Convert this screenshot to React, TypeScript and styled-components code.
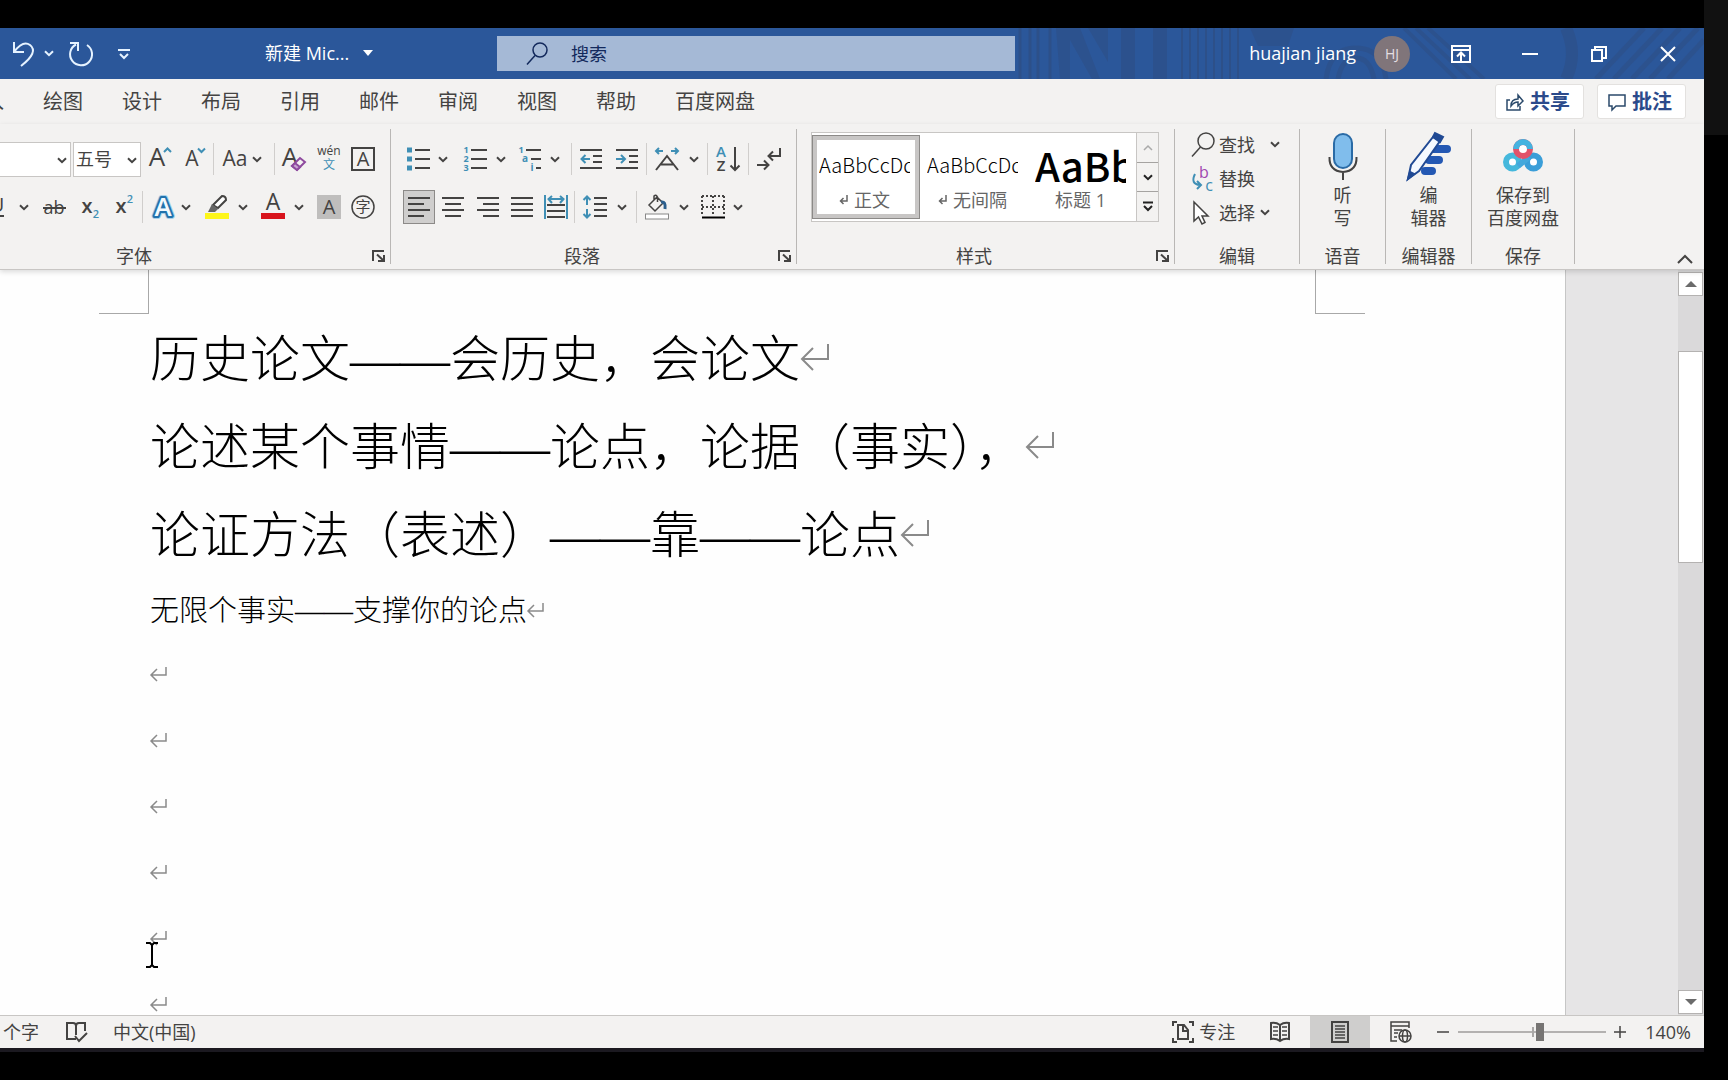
import React from "react";
import styled, { createGlobalStyle, css } from "styled-components";

const ink = "#444342";
const blue = "#2b579a";
const accent = "#3f8fb5";
const uiFont = `"Open Sans", "Noto Sans CJK SC", sans-serif`;

const GlobalStyle = createGlobalStyle`
  *, *::before, *::after { box-sizing: border-box; }
  body { margin: 0; background: #000; font-family: ${uiFont}; color: ${ink}; }
  button, select, input { font: inherit; color: inherit; }
  button { border: 0; background: none; padding: 0; margin: 0; }
  p { margin: 0; }
  svg { display: block; flex: none; overflow: visible; }
`;

/* ---------- frame ---------- */
const Screen = styled.div`
  display: flex;
  height: 100vh;
  overflow: hidden;
`;
const Column = styled.div`
  flex: 1;
  min-width: 0;
  display: flex;
  flex-direction: column;
  padding-top: 28px;
`;
const AppWindow = styled.div`
  flex: 1;
  min-height: 0;
  display: flex;
  flex-direction: column;
  overflow: hidden;
  background: #f3f2f1;
`;
const Desktop = styled.div`
  height: 32px;
  background: linear-gradient(#1b1920 0 4px, #000 4px);
`;
const Side = styled.div`
  width: 24px;
  background: linear-gradient(#111 0 135px, #000 135px);
`;

/* ---------- title bar ---------- */
const TitleBar = styled.header`
  position: relative;
  flex: none;
  height: 51px;
  display: grid;
  grid-template-columns: 497px 518px 1fr;
  align-items: center;
  overflow: hidden;
  background: ${blue};
  color: #fff;
  font-size: 18px;
`;
const Pattern = styled.svg`
  position: absolute;
  right: 0;
  top: 0;
`;
const QuickArea = styled.div`
  display: flex;
  align-items: center;
  padding-left: 12px;
`;
const QuickButton = styled.button<{ $w: number }>`
  width: ${(p) => p.$w}px;
  height: 40px;
  display: flex;
  align-items: center;
`;
const FileName = styled.button`
  display: flex;
  align-items: center;
  gap: 14px;
  margin-left: 111px;
  padding-bottom: 2px;
  line-height: 24px;
`;
const SearchBox = styled.label`
  display: flex;
  align-items: center;
  gap: 22px;
  height: 35px;
  padding-left: 30px;
  background: #a5b9d6;
  color: #13295c;
`;
const SearchInput = styled.input`
  flex: 1;
  min-width: 0;
  border: 0;
  padding: 0;
  background: transparent;
  outline: 0;
  &::placeholder { color: #13295c; opacity: 1; }
`;
const Account = styled.div`
  position: relative;
  display: flex;
  align-items: center;
  justify-content: flex-end;
  padding-right: 2px;
`;
const UserName = styled.span`
  padding-bottom: 2px;
  line-height: 24px;
`;
const Avatar = styled.span`
  display: grid;
  place-items: center;
  width: 36px;
  height: 36px;
  margin: 0 16px 0 18px;
  border-radius: 50%;
  background: #80757a;
  color: #e4dfe2;
  font-size: 14px;
`;
const WindowButton = styled.button`
  width: 69px;
  height: 51px;
  display: grid;
  place-items: center;
`;

/* ---------- tabs ---------- */
const TabBar = styled.div`
  flex: none;
  display: flex;
  align-items: center;
  height: 45px;
  padding-right: 18px;
  font-size: 20px;
`;
const Tabs = styled.nav`
  flex: 1;
  display: flex;
  gap: 39px;
  margin-left: -36px;
`;
const Tab = styled.button`
  white-space: nowrap;
  line-height: 28px;
`;
const PillButton = styled.button`
  display: flex;
  align-items: center;
  gap: 6px;
  height: 35px;
  margin-left: 13px;
  padding: 0 13px 0 10px;
  border: 1px solid #e3e1df;
  border-radius: 3px;
  background: #fff;
  color: #2b4a8b;
  font-weight: 700;
  line-height: 28px;
`;

/* ---------- ribbon ---------- */
const Ribbon = styled.div`
  position: relative;
  z-index: 1;
  flex: none;
  display: flex;
  padding: 5px 0;
  border-bottom: 1px solid #c8c6c4;
  box-shadow: 0 2px 5px rgba(0, 0, 0, 0.14);
  font-size: 18px;
`;
const Group = styled.section<{ $w: number; $clip?: number }>`
  flex: none;
  width: ${(p) => p.$w}px;
  height: 135px;
  margin-left: -${(p) => p.$clip ?? 0}px;
  display: flex;
  flex-direction: column;
  border-right: 1px solid #b9b7b5;
`;
const GroupFoot = styled.div`
  display: flex;
  align-items: center;
  height: 16px;
  margin-top: auto;
  line-height: 16px;
`;
const GroupName = styled.span`
  flex: 1;
  text-align: center;
`;
const Launcher = styled.button`
  width: 23px;
  display: flex;
  padding-left: 5px;
`;
const Rows = styled.div`
  padding-top: 6px;
`;
const Row = styled.div<{ $end?: boolean }>`
  display: flex;
  align-items: center;
  height: 48px;
  padding: ${(p) => (p.$end ? "0 10px 0 0" : "0 0 0 12px")};
  justify-content: ${(p) => (p.$end ? "flex-end" : "flex-start")};
`;
const Tool = styled.button<{ $w: number; $on?: boolean }>`
  flex: none;
  width: ${(p) => p.$w}px;
  height: 34px;
  display: flex;
  align-items: center;
  justify-content: center;
  ${(p) => p.$on && css`
    border: 1px solid #8c8a88;
    background: #cfcecd;
  `}
`;
const CaretButton = styled.button<{ $w: number }>`
  flex: none;
  width: ${(p) => p.$w}px;
  height: 34px;
  display: flex;
  align-items: center;
  padding-left: 3px;
`;
const Divider = styled.span`
  width: 1px;
  height: 32px;
  margin: 0 1px;
  background: #d0cecc;
`;
const Combo = styled.span<{ $w?: number }>`
  position: relative;
  flex: ${(p) => (p.$w ? `0 0 ${p.$w}px` : "1")};
  margin-right: ${(p) => (p.$w ? 0 : 2)}px;
`;
const ComboSelect = styled.select`
  appearance: none;
  display: block;
  width: 100%;
  height: 35px;
  padding: 0 0 0 2px;
  border: 1px solid #c8c6c4;
  border-radius: 0;
  background: #fff;
`;
const ComboMark = styled.span`
  position: absolute;
  right: 4px;
  top: 15px;
  pointer-events: none;
`;

const Gallery = styled.div`
  display: flex;
  height: 90px;
  margin: 3px 0 0 14px;
  width: 348px;
  border: 1px solid #c8c6c4;
  background: #fff;
`;
const StyleCard = styled.button<{ $on?: boolean }>`
  flex: 1;
  min-width: 0;
  height: 84px;
  margin-top: 2px;
  padding: 0 5px 0 2px;
  display: flex;
  flex-direction: column;
  justify-content: flex-end;
  border: 5px solid ${(p) => (p.$on ? "#c8c6c5" : "transparent")};
  outline: ${(p) => (p.$on ? "1px solid #8c8a88" : "0")};
  outline-offset: -1px;
`;
const Sample = styled.span<{ $big?: boolean }>`
  align-self: stretch;
  overflow: hidden;
  white-space: nowrap;
  text-align: left;
  color: #000;
  font-family: "Noto Sans CJK SC", sans-serif;
  font-size: ${(p) => (p.$big ? 40 : 20)}px;
  font-weight: ${(p) => (p.$big ? 500 : 300)};
  line-height: ${(p) => (p.$big ? 50 : 42)}px;
`;
const StyleName = styled.span`
  display: flex;
  align-items: center;
  justify-content: center;
  gap: 6px;
  color: #666;
  line-height: 28px;
`;
const GalleryScroll = styled.div`
  width: 22px;
  display: flex;
  flex-direction: column;
  border-left: 1px solid #c8c6c4;
  background: #f3f2f1;
`;
const GalleryButton = styled.button`
  flex: 1;
  display: grid;
  place-items: center;
  & + & { border-top: 1px solid #a5a3a1; }
`;

const EditList = styled.div`
  display: flex;
  flex-direction: column;
  padding-left: 16px;
`;
const EditItem = styled.button<{ $gap: number }>`
  display: flex;
  align-items: center;
  height: 34px;
  padding-bottom: 3px;
  line-height: 24px;
  & > svg:first-child { margin-right: 4px; }
  & > svg + span + svg { margin-left: ${(p) => p.$gap}px; }
`;
const BigButton = styled.button`
  display: flex;
  flex-direction: column;
  align-items: center;
  gap: 4px;
  padding-top: 3px;
  line-height: 23px;
  text-align: center;
  white-space: pre-line;
`;
const Collapse = styled.button`
  align-self: flex-end;
  margin: 0 11px 0 auto;
`;

/* ---------- document ---------- */
const Workspace = styled.main`
  flex: 1;
  min-height: 0;
  display: flex;
  background: #e6e5e6;
`;
const Page = styled.article`
  position: relative;
  flex: 1;
  min-width: 0;
  overflow: hidden;
  background: #fefefe;
  border-right: 1px solid #c6c6c6;
  font-family: "Liberation Serif", "Noto Sans CJK SC", serif;
  color: #000;
`;
const Corners = styled.div`
  display: flex;
  justify-content: space-between;
  padding: 0 200px 0 99px;
`;
const Corner = styled.span<{ $right?: boolean }>`
  width: 50px;
  height: 44px;
  border: solid #a8a8a8;
  border-width: ${(p) => (p.$right ? "0 0 1px 1px" : "0 1px 1px 0")};
`;
const Body = styled.div`
  padding: 2px 0 0 150px;
`;
const Line = styled.p<{ $kind: "large" | "small" | "blank" }>`
  display: flex;
  align-items: center;
  white-space: nowrap;
  font-weight: 300;
  font-size: ${(p) => (p.$kind === "large" ? 50 : 29)}px;
  line-height: ${(p) => ({ large: 88, small: 62, blank: 66 })[p.$kind]}px;
  height: ${(p) => ({ large: 88, small: 62, blank: 66 })[p.$kind]}px;
  & > svg { margin-bottom: ${(p) => (p.$kind === "large" ? 6 : 3)}px; }
`;
const Pointer = styled.svg`
  position: absolute;
  left: 145px;
  top: 672px;
`;
const Gutter = styled.div`
  width: 112px;
`;
const ScrollBar = styled.div`
  width: 26px;
  display: flex;
  flex-direction: column;
  padding: 2px 1px 1px 0;
  background: #dad9da;
`;
const ScrollButton = styled.button`
  height: 24px;
  display: grid;
  place-items: center;
  border: 1px solid #b4b2b1;
  background: #fff;
`;
const ScrollThumb = styled.div`
  height: 212px;
  margin: 55px 0 auto;
  border: 1px solid #b4b2b1;
  background: #fff;
`;

/* ---------- status bar ---------- */
const Status = styled.footer`
  flex: none;
  display: flex;
  align-items: stretch;
  height: 33px;
  padding: 0 13px 0 3px;
  border-top: 1px solid #c8c6c4;
  font-size: 18px;
  line-height: 32px;
`;
const StatusButton = styled.button<{ $w?: number; $on?: boolean; $gap?: number }>`
  width: ${(p) => (p.$w ? `${p.$w}px` : "auto")};
  display: flex;
  align-items: center;
  justify-content: center;
  gap: 5px;
  margin-left: ${(p) => p.$gap ?? 0}px;
  background: ${(p) => (p.$on ? "#cfcecd" : "transparent")};
`;
const Fill = styled.span`
  flex: 1;
`;
const Zoom = styled.input`
  appearance: none;
  align-self: center;
  width: 148px;
  height: 18px;
  margin: 0 4px;
  background:
    linear-gradient(#a9a7a6, #a9a7a6) 74px 50% / 2px 10px no-repeat,
    linear-gradient(#b3b1b0, #b3b1b0) 0 50% / 100% 2px no-repeat;
  &::-webkit-slider-thumb {
    appearance: none;
    width: 8px;
    height: 18px;
    background: #767473;
  }
`;

/* ---------- drawings ---------- */
type IconProps = { w: number; h: number; children: React.ReactNode; color?: string; sw?: number };
const Icon = ({ w, h, children, color = ink, sw = 2 }: IconProps) => (
  <svg width={w} height={h} viewBox={`0 0 ${w} ${h}`} fill="none" stroke={color} strokeWidth={sw} aria-hidden="true">
    {children}
  </svg>
);
type GlyphProps = { x: number; y: number; size: number; fill?: string; weight?: number; children: string };
const Glyph = ({ x, y, size, fill = ink, weight = 400, children }: GlyphProps) => (
  <text x={x} y={y} fontSize={size} fill={fill} stroke="none" fontWeight={weight} textAnchor="middle" fontFamily={uiFont}>
    {children}
  </text>
);
const Chevron = ({ color = ink }: { color?: string }) => (
  <Icon w={10} h={7} color={color}><path d="M1 1.2 5 5.2 9 1.2" /></Icon>
);
const Caret = ({ w, label }: { w: number; label: string }) => (
  <CaretButton $w={w} aria-label={label}><Chevron /></CaretButton>
);
const ReturnMark = ({ large }: { large?: boolean }) =>
  large ? (
    <Icon w={30} h={28} color="#8a8a8a" sw={2}><path d="M28 1V16H2M13 5 2 16 13 27" /></Icon>
  ) : (
    <Icon w={18} h={16} color="#8a8a8a" sw={1.5}><path d="M16 1V9H1M7 3 1 9 7 15" /></Icon>
  );
const LauncherIcon = () => (
  <Icon w={14} h={14}><path d="M1 12V2H12M5 5.500 12 12M12 6V12H6" /></Icon>
);
const lines = (rows: number[][]) => <path d={rows.map(([a, b, y]) => `M${a} ${y}H${b}`).join("")} />;

const Foot = ({ name, launcher }: { name: string; launcher?: boolean }) => (
  <GroupFoot>
    <GroupName>{name}</GroupName>
    {launcher && <Launcher aria-label={`${name}设置`}><LauncherIcon /></Launcher>}
  </GroupFoot>
);

const FontGroup = () => (
  <Group $w={490} $clip={99}>
    <Rows>
      <Row $end>
        <Combo>
          <ComboSelect aria-label="字体"><option></option></ComboSelect>
          <ComboMark><Chevron /></ComboMark>
        </Combo>
        <Combo $w={68}>
          <ComboSelect aria-label="字号"><option>五号</option></ComboSelect>
          <ComboMark><Chevron /></ComboMark>
        </Combo>
        <Tool $w={37} aria-label="增大字号">
          <Icon w={24} h={26}><Glyph x={9} y={20} size={26}>A</Glyph><path d="M16 6 19.500 2.500 23 6" stroke={accent} /></Icon>
        </Tool>
        <Tool $w={34} aria-label="减小字号">
          <Icon w={22} h={26}><Glyph x={8} y={20} size={21}>A</Glyph><path d="M14 2.500 17.500 6 21 2.500" stroke={accent} /></Icon>
        </Tool>
        <Divider />
        <Tool $w={34} aria-label="更改大小写">
          <Icon w={28} h={26}><Glyph x={17} y={20} size={21}>Aa</Glyph></Icon>
        </Tool>
        <Caret w={24} label="大小写选项" />
        <Divider />
        <Tool $w={36} aria-label="清除格式">
          <Icon w={26} h={28}>
            <Glyph x={9} y={21} size={26}>A</Glyph>
            <path d="M11 21 19 13 24 17 16 25Z" fill="#f3f2f1" stroke="#8e4a9e" />
            <path d="M11 21 14 18 19 22 16 25Z" fill="#c9a3d2" stroke="#8e4a9e" />
          </Icon>
        </Tool>
        <Tool $w={34} aria-label="拼音指南">
          <Icon w={24} h={30}><Glyph x={12} y={11} size={12}>wén</Glyph><Glyph x={12} y={25} size={12} fill={accent}>文</Glyph></Icon>
        </Tool>
        <Tool $w={34} aria-label="字符边框">
          <Icon w={24} h={24}><rect x={1} y={1} width={22} height={22} /><Glyph x={12} y={19} size={20}>A</Glyph></Icon>
        </Tool>
      </Row>
      <Row $end>
        <Tool $w={38} aria-label="下划线">
          <Icon w={16} h={24}><Glyph x={8} y={17} size={20}>U</Glyph><path d="M1 21H15" /></Icon>
        </Tool>
        <Caret w={20} label="下划线选项" />
        <Tool $w={38} aria-label="删除线">
          <Icon w={24} h={24}><Glyph x={11} y={19} size={18}>ab</Glyph><path d="M0 13H23" /></Icon>
        </Tool>
        <Tool $w={34} aria-label="下标">
          <Icon w={20} h={28}><Glyph x={6} y={20} size={20} weight={600}>x</Glyph><Glyph x={15} y={25} size={11} fill={accent} weight={600}>2</Glyph></Icon>
        </Tool>
        <Tool $w={33} aria-label="上标">
          <Icon w={20} h={28}><Glyph x={6} y={20} size={20} weight={600}>x</Glyph><Glyph x={15} y={10} size={11} fill={accent} weight={600}>2</Glyph></Icon>
        </Tool>
        <Divider />
        <Tool $w={34} aria-label="文本效果">
          <svg width={26} height={28} viewBox="0 0 26 28" aria-hidden="true">
            <g fontFamily={uiFont} fontSize={26} fontWeight={600} textAnchor="middle" strokeLinejoin="round">
              <text x={15} y={23} fill="none" stroke="#a9cfe8" strokeWidth={6}>A</text>
              <text x={15} y={23} fill="none" stroke="#2272ac" strokeWidth={4}>A</text>
              <text x={15} y={23} fill="#f2f9fd">A</text>
            </g>
          </svg>
        </Tool>
        <Caret w={21} label="文本效果选项" />
        <Tool $w={36} aria-label="突出显示">
          <Icon w={26} h={26}>
            <rect x={1} y={19} width={24} height={6} fill="#fdf61b" stroke="none" />
            <path d="M9 11 18 2Q22 2 22 6L14 14Z" fill="#fff" />
            <path d="M8 10 14 15 11 18H4Z" fill="#666" stroke="none" />
          </Icon>
        </Tool>
        <Caret w={20} label="突出显示选项" />
        <Tool $w={36} aria-label="字体颜色">
          <Icon w={24} h={26}><Glyph x={12} y={16} size={23}>A</Glyph><rect x={0} y={19} width={24} height={6} fill="#d8141c" stroke="none" /></Icon>
        </Tool>
        <Caret w={21} label="字体颜色选项" />
        <Tool $w={34} aria-label="字符底纹">
          <Icon w={24} h={24}><rect width={24} height={24} fill="#bfbebd" stroke="none" /><Glyph x={12} y={19} size={20}>A</Glyph></Icon>
        </Tool>
        <Tool $w={34} aria-label="带圈字符">
          <Icon w={24} h={24} sw={1.500}><circle cx={12} cy={12} r={11} /><Glyph x={12} y={17} size={15}>字</Glyph></Icon>
        </Tool>
      </Row>
    </Rows>
    <Foot name="字体" launcher />
  </Group>
);

const ParagraphGroup = () => (
  <Group $w={406}>
    <Rows>
      <Row>
        <Tool $w={32} aria-label="项目符号">
          <Icon w={24} h={24}>
            {lines([[8, 23, 3], [8, 23, 12], [8, 23, 21]])}
            <path d="M0 .5H5V5.500H0ZM0 9.500H5V14.500H0ZM0 18.500H5V23.500H0Z" fill={accent} stroke="none" />
          </Icon>
        </Tool>
        <Caret w={22} label="项目符号选项" />
        <Tool $w={36} aria-label="编号">
          <Icon w={24} h={26}>
            {lines([[8, 24, 4], [8, 24, 13], [8, 24, 22]])}
            <Glyph x={3} y={7} size={9} fill={accent} weight={700}>1</Glyph>
            <Glyph x={3} y={16} size={9} fill={accent} weight={700}>2</Glyph>
            <Glyph x={3} y={25} size={9} fill={accent} weight={700}>3</Glyph>
          </Icon>
        </Tool>
        <Caret w={19} label="编号选项" />
        <Tool $w={35} aria-label="多级列表">
          <Icon w={24} h={26}>
            {lines([[8, 23, 4], [13, 23, 13], [18, 23, 22]])}
            <Glyph x={3} y={7} size={9} fill={accent} weight={700}>1</Glyph>
            <Glyph x={7} y={16} size={10} fill={accent} weight={700}>a</Glyph>
            <Glyph x={14} y={25} size={10} fill={accent} weight={700}>i</Glyph>
          </Icon>
        </Tool>
        <Caret w={23} label="多级列表选项" />
        <Divider />
        <Tool $w={36} aria-label="减少缩进量">
          <Icon w={22} h={22}>{lines([[0, 22, 2], [13, 22, 8], [13, 22, 14], [0, 22, 20]])}<path d="M10 11H1.500M5.500 7 1.500 11 5.500 15" stroke={accent} /></Icon>
        </Tool>
        <Tool $w={36} aria-label="增加缩进量">
          <Icon w={22} h={22}>{lines([[0, 22, 2], [13, 22, 8], [13, 22, 14], [0, 22, 20]])}<path d="M0 11H9M5 7 9 11 5 15" stroke={accent} /></Icon>
        </Tool>
        <Divider />
        <Tool $w={38} aria-label="中文版式">
          <Icon w={26} h={26}>
            <path d="M2 24 13 10 24 24M7 18.500H19" />
            <path d="M9 5H2M5 2 2 5 5 8M17 5H24M21 2 24 5 21 8" stroke={accent} />
          </Icon>
        </Tool>
        <Caret w={20} label="中文版式选项" />
        <Divider />
        <Tool $w={38} aria-label="排序">
          <Icon w={26} h={28}>
            <Glyph x={6} y={12} size={15} fill={accent} weight={600}>A</Glyph>
            <Glyph x={6} y={26} size={15} weight={600}>Z</Glyph>
            <path d="M20 2V25M15.500 20.500 20 25 24.500 20.500" />
          </Icon>
        </Tool>
        <Divider />
        <Tool $w={38} aria-label="显示编辑标记">
          <Icon w={26} h={26}><path d="M24 2V10H13M17 5.500 12.500 10 17 14.500M1 19H12M8 14.500 12.500 19 8 23.500" /></Icon>
        </Tool>
      </Row>
      <Row>
        <Tool $w={32} $on aria-label="左对齐"><Icon w={22} h={22}>{lines([[0, 22, 2], [0, 16, 8], [0, 22, 14], [0, 16, 20]])}</Icon></Tool>
        <Tool $w={36} aria-label="居中"><Icon w={22} h={22}>{lines([[0, 22, 2], [3, 19, 8], [0, 22, 14], [3, 19, 20]])}</Icon></Tool>
        <Tool $w={34} aria-label="右对齐"><Icon w={22} h={22}>{lines([[0, 22, 2], [6, 22, 8], [0, 22, 14], [6, 22, 20]])}</Icon></Tool>
        <Tool $w={34} aria-label="两端对齐"><Icon w={22} h={22}>{lines([[0, 22, 2], [0, 22, 8], [0, 22, 14], [0, 22, 20]])}</Icon></Tool>
        <Tool $w={34} aria-label="分散对齐">
          <Icon w={24} h={24}>
            {lines([[3, 21, 10], [3, 21, 16], [3, 21, 22]])}
            <path d="M1 0V24M23 0V24M4 4H20M8 1 4.500 4 8 8M16 1 19.500 4 16 8" stroke={accent} />
          </Icon>
        </Tool>
        <Divider />
        <Tool $w={38} aria-label="行距">
          <Icon w={24} h={24}>{lines([[11, 24, 3], [11, 24, 9], [11, 24, 15], [11, 24, 21]])}<path d="M4 10V2M.5 5 4 1.500 7.500 5M4 14V22M.5 19 4 22.500 7.500 19" stroke={accent} /></Icon>
        </Tool>
        <Caret w={21} label="行距选项" />
        <Divider />
        <Tool $w={38} aria-label="底纹">
          <Icon w={26} h={26} sw={1.500}>
            <path d="M5 11 13 3 19 9 11 17ZM10 6V2Q12 0 13.500 3V8" />
            <path d="M17 8Q22 7 21 15" stroke="#2c5f8d" strokeWidth={3} />
            <rect x={1.500} y={20} width={23} height={5} fill="#fff" stroke="#888" strokeWidth={1} />
          </Icon>
        </Tool>
        <Caret w={20} label="底纹选项" />
        <Tool $w={34} aria-label="边框">
          <Icon w={24} h={24}>
            <path d="M1 1H23M1 12H23M1 1V21M12 1V21M23 1V21" strokeDasharray="2 2" />
            <path d="M1 22.500H24" stroke="#000" />
          </Icon>
        </Tool>
        <Caret w={20} label="边框选项" />
      </Row>
    </Rows>
    <Foot name="段落" launcher />
  </Group>
);

const SmallReturn = () => (
  <Icon w={9} h={10} color="#666" sw={1.500}><path d="M8 0V6H2M4.500 3 1.500 6 4.500 9" /></Icon>
);

const StylesGroup = () => (
  <Group $w={378}>
    <Gallery>
      <StyleCard $on><Sample>AaBbCcDd</Sample><StyleName><SmallReturn />正文</StyleName></StyleCard>
      <StyleCard><Sample>AaBbCcDd</Sample><StyleName><SmallReturn />无间隔</StyleName></StyleCard>
      <StyleCard><Sample $big>AaBb</Sample><StyleName>标题 1</StyleName></StyleCard>
      <GalleryScroll>
        <GalleryButton aria-label="上一行"><Icon w={10} h={7} color="#aaa" sw={1.500}><path d="M1 6 5 2 9 6" /></Icon></GalleryButton>
        <GalleryButton aria-label="下一行"><Chevron color="#222" /></GalleryButton>
        <GalleryButton aria-label="更多样式"><Icon w={10} h={12} color="#222"><path d="M0 1.500H10M1 5 5 9 9 5" /></Icon></GalleryButton>
      </GalleryScroll>
    </Gallery>
    <Foot name="样式" launcher />
  </Group>
);

const EditGroup = () => (
  <Group $w={125}>
    <EditList>
      <EditItem $gap={15}>
        <Icon w={24} h={26} sw={1.500}><circle cx={15} cy={9} r={8} /><path d="M9.500 15 1 24.500" /></Icon>
        <span>查找</span><Chevron />
      </EditItem>
      <EditItem $gap={0}>
        <Icon w={24} h={26}>
          <Glyph x={13} y={12} size={16} fill="#a048b0">b</Glyph>
          <Glyph x={18} y={25} size={16} fill={accent}>c</Glyph>
          <path d="M4 8Q-1 18 9 19M6 15 10 19 6 23" stroke={accent} />
        </Icon>
        <span>替换</span>
      </EditItem>
      <EditItem $gap={5}>
        <Icon w={24} h={26} sw={1.500}><path d="M3 2V21L7.500 17 11 24 14 22.500 11 16H17Z" fill="#fff" /></Icon>
        <span>选择</span><Chevron />
      </EditItem>
    </EditList>
    <Foot name="编辑" />
  </Group>
);

const MicIcon = () => (
  <Icon w={30} h={48}>
    <rect x={6} y={2} width={18} height={34} rx={9} fill="#80bdec" stroke="#2a6ba6" />
    <path d="M1.500 25Q1 39 15 40Q29 39 28.500 25M15 40V48" />
  </Icon>
);
const EditorIcon = () => (
  <Icon w={48} h={48} color="#214a94">
    <path d="M28 17H42M24 28H34M20 39H27" stroke="#2458b3" strokeWidth={8} strokeLinecap="round" />
    <path d="M28 5 35 9 14 39 3 47 6 33Z" fill="#f5f9ff" />
    <path d="M28 5 30 1 38 5 35 10Z" fill="#214a94" />
    <path d="M3 47 5 40 9 42Z" fill="#214a94" />
  </Icon>
);
const NetDiskIcon = () => (
  <Icon w={40} h={48}>
    <circle cx={9.500} cy={30} r={6.500} fill="#fff" stroke="#45b8dc" strokeWidth={6} />
    <circle cx={30.500} cy={30} r={6.500} fill="#fff" stroke="#3a9ed8" strokeWidth={6} />
    <path d="M15 34 26 25" stroke="#43a8dc" strokeWidth={6} />
    <circle cx={20} cy={17} r={7} fill="#fff" stroke="#e2536a" strokeWidth={6} />
    <path d="M13 17A7 7 0 0 1 27 17" stroke="#45b3e0" strokeWidth={6} />
  </Icon>
);

const tabs = ["插入", "绘图", "设计", "布局", "引用", "邮件", "审阅", "视图", "帮助", "百度网盘"];
const paragraphs: { kind: "large" | "small" | "blank"; text: string }[] = [
  { kind: "large", text: "历史论文——会历史，会论文" },
  { kind: "large", text: "论述某个事情——论点，论据（事实），" },
  { kind: "large", text: "论证方法（表述）——靠——论点" },
  { kind: "small", text: "无限个事实——支撑你的论点" },
  ...Array.from({ length: 6 }, () => ({ kind: "blank" as const, text: "" })),
];

const TitlePattern = () => (
  <Pattern width={700} height={51} viewBox="0 0 700 51" fill="none" stroke="#2d5089" aria-hidden="true">
    <path d="M16 0V51M26 0V51M34 0V51M46 0V51" strokeWidth={3} />
    <path d="M52 0H76L96 51H88L66 12V51H56ZM84 0H104V34Z" fill="#2d5089" stroke="none" opacity={0.7} />
    <path d="M124 0V51M156 0V51" strokeWidth={14} opacity={0.8} />
    <path d="M178 0V51M186 0V51M194 0V51M202 0V51M210 0V51M218 0V51M226 0V51M234 0V51" strokeWidth={2} />
    <path d="M246 0H290L284 18H254Z" fill="#2d5089" stroke="none" opacity={0.7} />
    <path d="M322 51Q326 20 352 20T382 51M334 51Q338 30 352 30T370 51" strokeWidth={5} opacity={0.7} />
    <path d="M400 0 452 51M412 0 466 51M424 0 480 51" strokeWidth={4} opacity={0.7} />
    <path d="M562 0Q574 26 562 51" strokeWidth={12} opacity={0.7} />
    <path d="M592 51 640 0M610 51 658 0M628 51 676 0M646 51 694 0M664 51 700 12" strokeWidth={5} opacity={0.7} />
  </Pattern>
);

export default function App() {
  return (
    <>
      <GlobalStyle />
      <Screen>
        <Column>
          <AppWindow>
            <TitleBar>
              <TitlePattern />
              <QuickArea>
                <QuickButton $w={32} aria-label="撤消">
                  <Icon w={24} h={26} color="#e6f3ff"><path d="M2 1V11H12M2 11Q11 -1 18 4Q27 11 9 25" /></Icon>
                </QuickButton>
                <QuickButton $w={24} aria-label="撤消选项"><Chevron color="#e6f3ff" /></QuickButton>
                <QuickButton $w={50} aria-label="重复">
                  <Icon w={26} h={26} color="#e6f3ff"><path d="M2 2H10V10M8 3.500A11 11 0 1 0 19 4" /></Icon>
                </QuickButton>
                <QuickButton $w={36} aria-label="自定义快速访问工具栏">
                  <Icon w={12} h={12} color="#e6f3ff"><path d="M0 2H12M2 6 6 10 10 6" /></Icon>
                </QuickButton>
                <FileName>
                  新建 Mic...
                  <Icon w={10} h={6}><path d="M0 0H10L5 6Z" fill="#fff" stroke="none" /></Icon>
                </FileName>
              </QuickArea>
              <SearchBox>
                <Icon w={22} h={24} color="#13295c" sw={1.500}><circle cx={13} cy={8} r={7} /><path d="M8 13.500 0 22.500" /></Icon>
                <SearchInput type="text" placeholder="搜索" aria-label="搜索" />
              </SearchBox>
              <Account>
                <UserName>huajian jiang</UserName>
                <Avatar>HJ</Avatar>
                <WindowButton aria-label="功能区显示选项">
                  <Icon w={20} h={18} color="#fff"><path d="M1 1H19V17H1ZM1 5H19M10 16V8M6 11.500 10 7.500 14 11.500" /></Icon>
                </WindowButton>
                <WindowButton aria-label="最小化"><Icon w={16} h={4} color="#fff"><path d="M0 2H16" /></Icon></WindowButton>
                <WindowButton aria-label="还原"><Icon w={18} h={18} color="#fff"><path d="M2 5H12V16H2ZM5 5V2H16V13H12" /></Icon></WindowButton>
                <WindowButton aria-label="关闭"><Icon w={16} h={16} color="#fff"><path d="M1 1 15 15M15 1 1 15" /></Icon></WindowButton>
              </Account>
            </TitleBar>

            <TabBar>
              <Tabs>{tabs.map((t) => <Tab key={t}>{t}</Tab>)}</Tabs>
              <PillButton>
                <Icon w={18} h={18} color="#2b4a6b" sw={1.500}>
                  <path d="M4 7H1V17H14V13M5 13Q5 6 12 6V2L17 8 12 13V9Q8 9 5 13Z" />
                </Icon>
                共享
              </PillButton>
              <PillButton>
                <Icon w={18} h={18} color="#2b4a6b" sw={1.500}><path d="M1 2H17V13H8L4 17V13H1Z" /></Icon>
                批注
              </PillButton>
            </TabBar>

            <Ribbon>
              <FontGroup />
              <ParagraphGroup />
              <StylesGroup />
              <EditGroup />
              <Group $w={86}><BigButton><MicIcon />{"听\n写"}</BigButton><Foot name="语音" /></Group>
              <Group $w={86}><BigButton><EditorIcon />{"编\n辑器"}</BigButton><Foot name="编辑器" /></Group>
              <Group $w={103}><BigButton><NetDiskIcon />{"保存到\n百度网盘"}</BigButton><Foot name="保存" /></Group>
              <Collapse aria-label="折叠功能区"><Icon w={16} h={10}><path d="M1 9 8 2 15 9" /></Icon></Collapse>
            </Ribbon>

            <Workspace>
              <Page>
                <Corners><Corner /><Corner $right /></Corners>
                <Body>
                  {paragraphs.map((p, i) => (
                    <Line key={i} $kind={p.kind}>
                      {p.text}
                      <ReturnMark large={p.kind === "large"} />
                    </Line>
                  ))}
                </Body>
                <Pointer width={14} height={26} viewBox="0 0 14 26" fill="none" stroke="#000" strokeWidth={2} aria-hidden="true">
                  <path d="M1 1H5L7 3 9 1H13M7 3V23M1 25H5L7 23 9 25H13" />
                </Pointer>
              </Page>
              <Gutter />
              <ScrollBar>
                <ScrollButton aria-label="向上滚动"><Icon w={12} h={6}><path d="M0 6H12L6 0Z" fill="#6b6b6b" stroke="none" /></Icon></ScrollButton>
                <ScrollThumb />
                <ScrollButton aria-label="向下滚动"><Icon w={12} h={6}><path d="M0 0H12L6 6Z" fill="#6b6b6b" stroke="none" /></Icon></ScrollButton>
              </ScrollBar>
            </Workspace>

            <Status>
              <StatusButton>个字</StatusButton>
              <StatusButton $gap={26} aria-label="校对">
                <Icon w={24} h={22}><path d="M11 18H2V2H8Q11 2 11 5V14M11 5Q11 2 14 2H20V10M10 15 14 20 22 12" /></Icon>
              </StatusButton>
              <StatusButton $gap={24}>中文(中国)</StatusButton>
              <Fill />
              <StatusButton>
                <Icon w={22} h={22}><path d="M5 1H1V5M17 1H21V5M1 17V21H5M21 17V21H17M6 4H12L16 9V18H6ZM11 4V10H16" /></Icon>
                专注
              </StatusButton>
              <StatusButton $w={60} $gap={15} aria-label="阅读视图">
                <Icon w={22} h={22}>
                  <path d="M11 4Q7 1 2 2V18Q7 17 11 20Q15 17 20 18V2Q15 1 11 4V20" />
                  <path d="M4 6H9M4 10H9M4 14H9M13 6H18M13 10H18M13 14H18" strokeWidth={1.500} />
                </Icon>
              </StatusButton>
              <StatusButton $w={60} $on aria-label="页面视图">
                <Icon w={18} h={22}><path d="M1 1H17V21H1Z" /><path d="M4 5H14M4 8H14M4 11H14M4 14H14M4 17H14" strokeWidth={1.500} /></Icon>
              </StatusButton>
              <StatusButton $w={62} aria-label="Web 版式">
                <Icon w={22} h={22} sw={1.500}>
                  <path d="M7 20H1V1H19V7M1 5H19M4 9H12M4 12H8M4 16H7" />
                  <circle cx={15} cy={15} r={6} /><ellipse cx={15} cy={15} rx={2.500} ry={6} /><path d="M9 15H21" />
                </Icon>
              </StatusButton>
              <StatusButton $w={22} aria-label="缩小"><Icon w={12} h={12} sw={1.500}><path d="M0 6H12" /></Icon></StatusButton>
              <Zoom type="range" min={10} max={258} defaultValue={147} aria-label="缩放级别" />
              <StatusButton $w={20} aria-label="放大"><Icon w={12} h={12} sw={1.500}><path d="M0 6H12M6 0V12" /></Icon></StatusButton>
              <StatusButton $gap={15}>140%</StatusButton>
            </Status>
          </AppWindow>
          <Desktop />
        </Column>
        <Side />
      </Screen>
    </>
  );
}
